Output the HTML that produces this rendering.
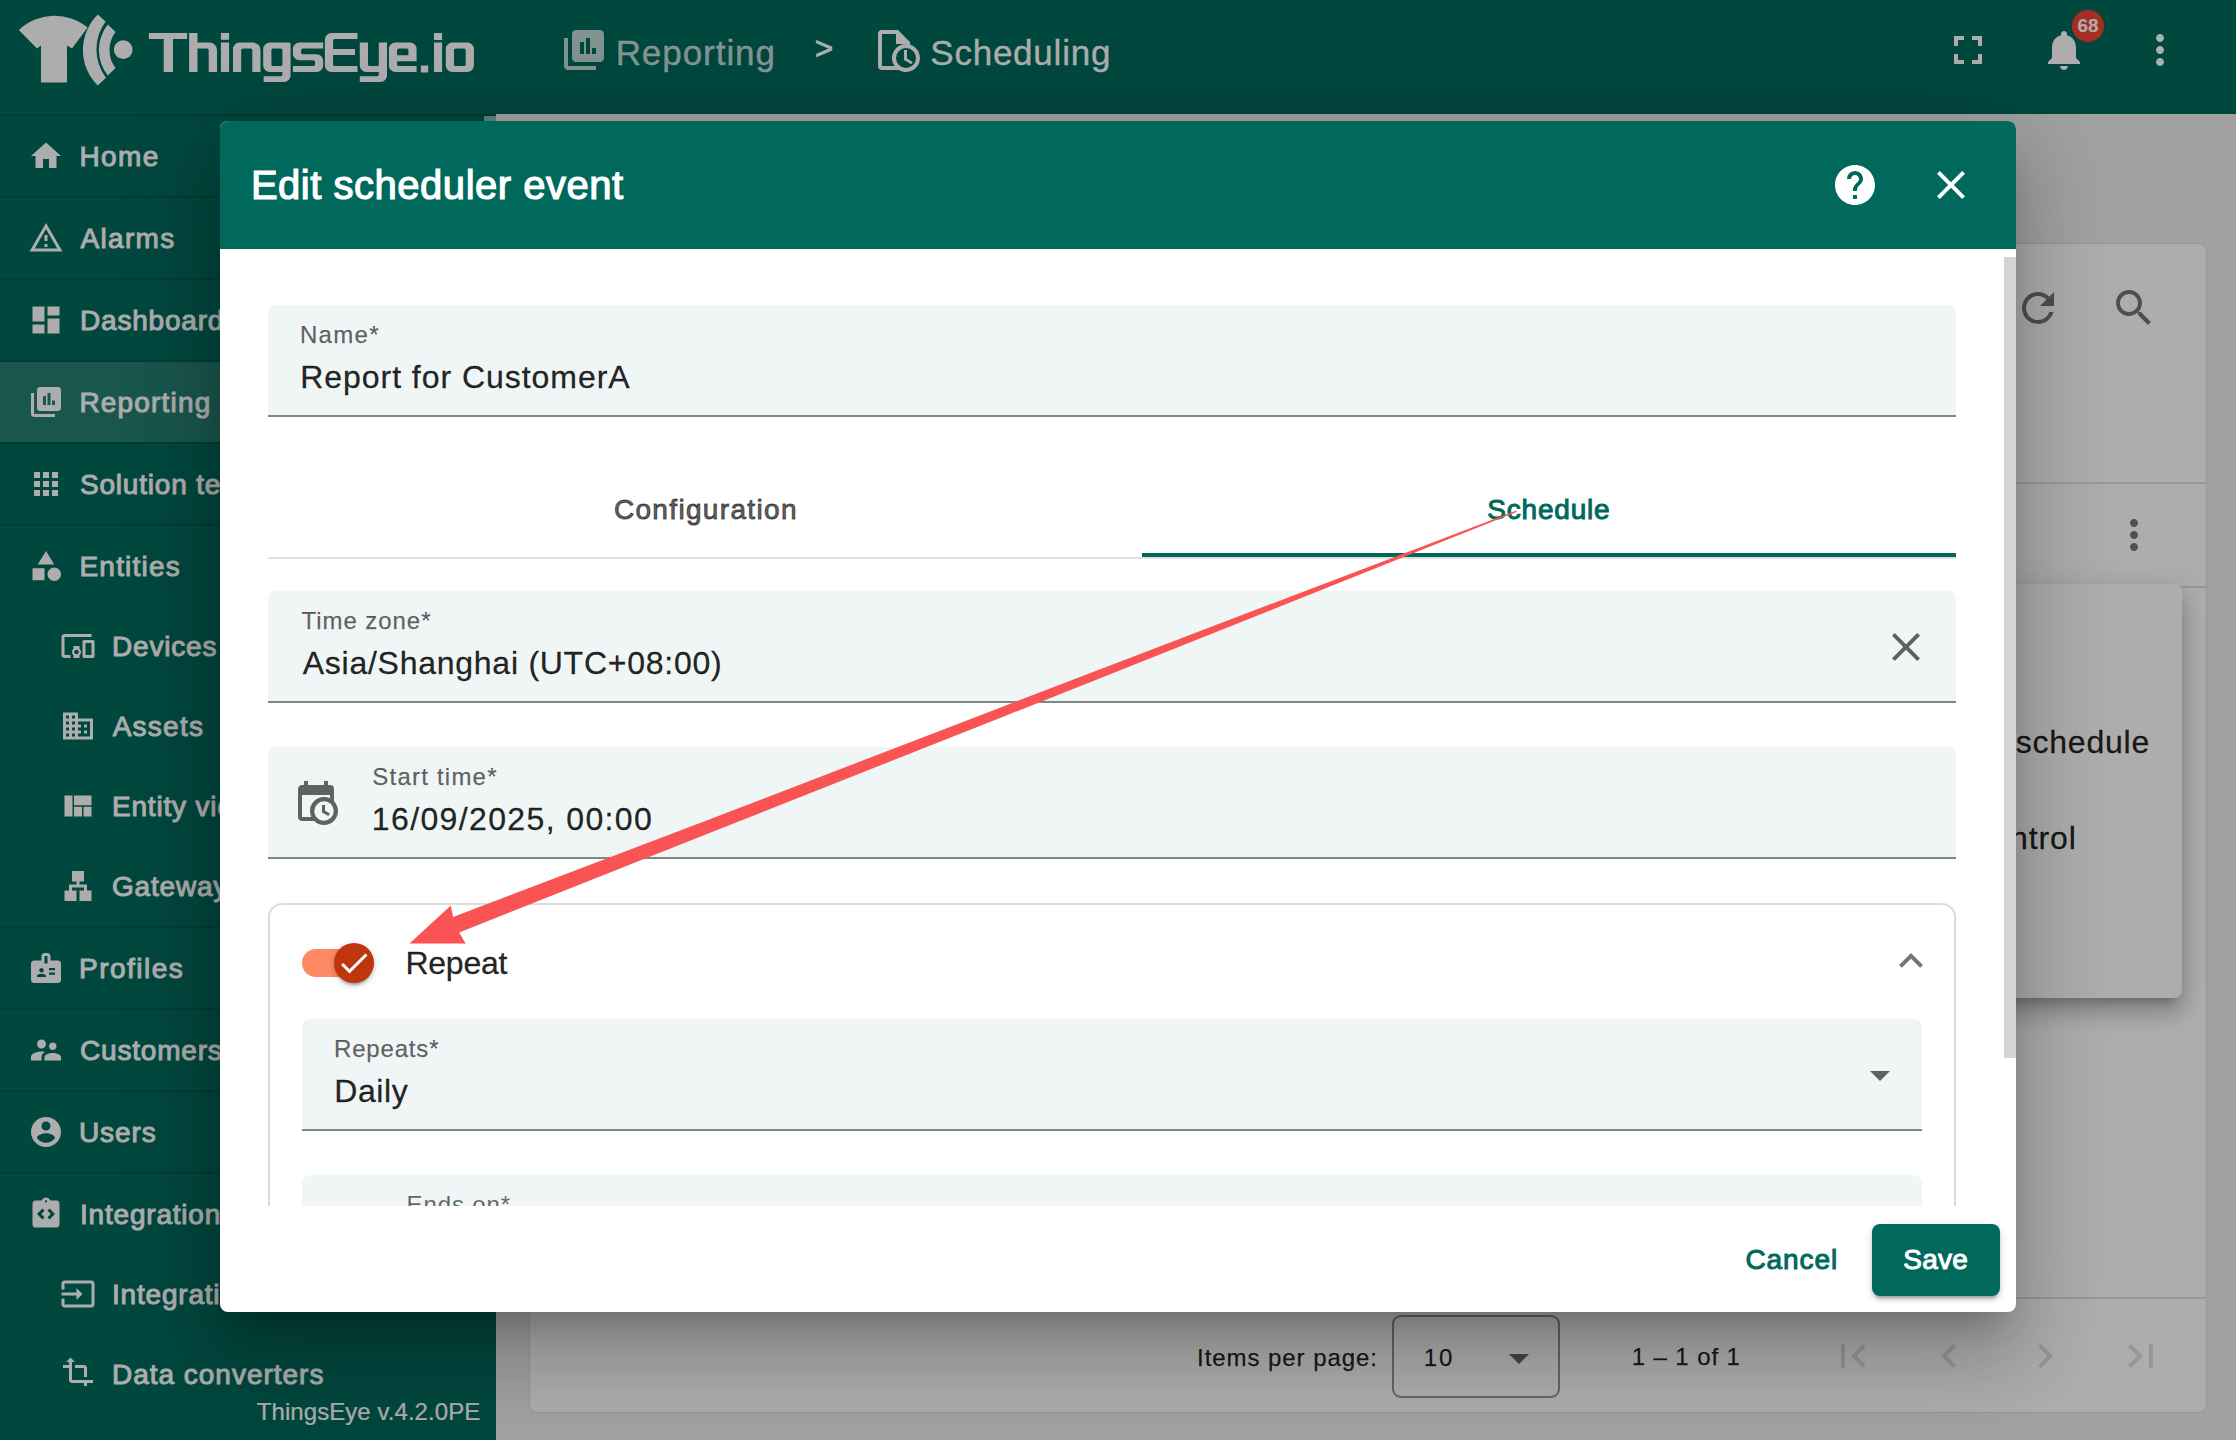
<!DOCTYPE html>
<html><head><meta charset="utf-8"><title>ThingsEye</title>
<style>
html,body{margin:0;padding:0;}
body{width:2236px;height:1440px;position:relative;overflow:hidden;background:#eeeeee;font-family:"Liberation Sans",sans-serif;}
.t{position:absolute;white-space:nowrap;line-height:1;font-family:"Liberation Sans",sans-serif;}
.i{position:absolute;display:block;}
.b{position:absolute;box-sizing:border-box;}
#page,#overlay,#dlg,#arrow{position:absolute;left:0;top:0;width:2236px;height:1440px;}
#overlay{background:rgba(0,0,0,0.32);}
</style></head><body>
<div id="page">
<div class="b" style="left:529px;top:243px;width:1678px;height:1170px;background:#fff;border-radius:9px;border:1.5px solid rgba(0,0,0,.13);"></div>
<svg class="i" style="left:2014.0px;top:284.0px;" width="48" height="48" viewBox="0 0 24 24" fill="rgba(0,0,0,.54)"><path d="M17.650 6.350C16.200 4.900 14.210 4 12 4c-4.420 0-7.990 3.580-7.990 8s3.570 8 7.990 8c3.730 0 6.840-2.550 7.730-6h-2.080c-.820 2.330-3.040 4-5.650 4-3.310 0-6-2.690-6-6s2.690-6 6-6c1.660 0 3.140.690 4.220 1.780L13 11h7V4l-2.350 2.350z"/></svg>
<svg class="i" style="left:2110.0px;top:284.0px;" width="48" height="48" viewBox="0 0 24 24" fill="rgba(0,0,0,.54)"><path d="M15.500 14h-.790l-.280-.270C15.410 12.590 16 11.110 16 9.500 16 5.910 13.090 3 9.500 3S3 5.910 3 9.500 5.910 16 9.500 16c1.610 0 3.090-.590 4.230-1.570l.270.280v.790l5 4.990L20.490 19l-4.990-5zm-6 0C7.010 14 5 11.990 5 9.500S7.010 5 9.500 5 14 7.010 14 9.500 11.990 14 9.500 14z"/></svg>
<div class="b" style="left:530px;top:482px;width:1676px;height:2px;background:rgba(0,0,0,.12);"></div>
<svg class="i" style="left:2110.0px;top:511.0px;" width="48" height="48" viewBox="0 0 24 24" fill="rgba(0,0,0,.54)"><path d="M12 8c1.100 0 2-.9 2-2s-.9-2-2-2-2 .9-2 2 .9 2 2 2zm0 2c-1.100 0-2 .9-2 2s.9 2 2 2 2-.9 2-2-.9-2-2-2zm0 6c-1.100 0-2 .9-2 2s.9 2 2 2 2-.9 2-2-.9-2-2-2z"/></svg>
<div class="b" style="left:530px;top:585.5px;width:1676px;height:2px;background:rgba(0,0,0,.12);"></div>
<div class="b" style="left:1700px;top:584px;width:482px;height:414px;background:#fff;border-radius:8px;box-shadow:0 10px 10px -6px rgba(0,0,0,.2),0 16px 20px 2px rgba(0,0,0,.14),0 6px 28px 4px rgba(0,0,0,.12);"></div>
<div class="t" style="left:2015.77px;top:726.4px;font-size:32px;color:rgba(0,0,0,.87);letter-spacing:0.77px;-webkit-text-stroke:0.3px rgba(0,0,0,.87);">schedule</div>
<div class="t" style="left:1974.29px;top:822.4px;font-size:32px;color:rgba(0,0,0,.87);letter-spacing:0.93px;-webkit-text-stroke:0.3px rgba(0,0,0,.87);">control</div>
<div class="b" style="left:530px;top:1297px;width:1676px;height:2px;background:rgba(0,0,0,.12);"></div>
<div class="t" style="left:1197.06px;top:1346.2px;font-size:24px;color:rgba(0,0,0,.87);letter-spacing:0.94px;-webkit-text-stroke:0.25px rgba(0,0,0,.87);">Items per page:</div>
<div class="b" style="left:1392px;top:1315px;width:168px;height:83px;border:2px solid rgba(0,0,0,.42);border-radius:9px;"></div>
<div class="t" style="left:1423.83px;top:1346.2px;font-size:24px;color:rgba(0,0,0,.87);letter-spacing:1.81px;-webkit-text-stroke:0.25px rgba(0,0,0,.87);">10</div>
<svg class="i" style="left:1508.5px;top:1353.5px" width="20" height="10" viewBox="0 0 22 11"><path d="M0 0h22L11 11z" fill="rgba(0,0,0,.6)"/></svg>
<div class="t" style="left:1631.73px;top:1344.7px;font-size:24px;color:rgba(0,0,0,.87);letter-spacing:0.90px;-webkit-text-stroke:0.25px rgba(0,0,0,.87);">1 – 1 of 1</div>
<svg class="i" style="left:1829.0px;top:1332.0px;" width="48" height="48" viewBox="0 0 24 24" fill="rgba(0,0,0,.13)"><path d="M18.410 16.590L13.820 12l4.590-4.590L17 6l-6 6 6 6zM6 6h2v12H6z"/></svg>
<svg class="i" style="left:1925.0px;top:1332.0px;" width="48" height="48" viewBox="0 0 24 24" fill="rgba(0,0,0,.13)"><path d="M15.410 7.410L14 6l-6 6 6 6 1.410-1.410L10.830 12z"/></svg>
<svg class="i" style="left:2021.0px;top:1332.0px;" width="48" height="48" viewBox="0 0 24 24" fill="rgba(0,0,0,.13)"><path d="M10 6L8.590 7.410 13.170 12l-4.580 4.590L10 18l6-6z"/></svg>
<svg class="i" style="left:2117.0px;top:1332.0px;" width="48" height="48" viewBox="0 0 24 24" fill="rgba(0,0,0,.13)"><path d="M5.590 7.410L10.180 12l-4.590 4.590L7 18l6-6-6-6zM16 6h2v12h-2z"/></svg>
<div class="b" style="left:0px;top:114px;width:496px;height:1326px;background:#00695c;"></div>
<div class="b" style="left:484px;top:116px;width:12px;height:1080px;background:rgba(255,255,255,.55);"></div>
<div class="b" style="left:0px;top:114px;width:496px;height:2px;background:rgba(0,0,0,.13);"></div>
<div class="b" style="left:0px;top:196px;width:484px;height:2px;background:rgba(0,0,0,.13);"></div>
<div class="b" style="left:0px;top:278px;width:484px;height:2px;background:rgba(0,0,0,.13);"></div>
<div class="b" style="left:0px;top:360px;width:484px;height:2px;background:rgba(0,0,0,.13);"></div>
<div class="b" style="left:0px;top:442px;width:484px;height:2px;background:rgba(0,0,0,.13);"></div>
<div class="b" style="left:0px;top:524px;width:484px;height:2px;background:rgba(0,0,0,.13);"></div>
<div class="b" style="left:0px;top:926px;width:484px;height:2px;background:rgba(0,0,0,.13);"></div>
<div class="b" style="left:0px;top:1008px;width:484px;height:2px;background:rgba(0,0,0,.13);"></div>
<div class="b" style="left:0px;top:1090px;width:484px;height:2px;background:rgba(0,0,0,.13);"></div>
<div class="b" style="left:0px;top:1172px;width:484px;height:2px;background:rgba(0,0,0,.13);"></div>
<div class="b" style="left:0px;top:362px;width:484px;height:80px;background:rgba(255,255,255,.15);"></div>
<svg class="i" style="left:28.0px;top:138.0px;" width="36" height="36" viewBox="0 0 24 24" fill="#fff"><path d="M10 20v-6h4v6h5v-8h3L12 3 2 12h3v8z"/></svg>
<div class="t" style="left:79.44px;top:143.3px;font-size:28px;color:#fff;letter-spacing:1.43px;-webkit-text-stroke:0.95px #fff;">Home</div>
<svg class="i" style="left:28.0px;top:220.0px;" width="36" height="36" viewBox="0 0 24 24" fill="#fff"><path d="M12 5.99L19.53 19H4.47L12 5.99M12 2L1 21h22L12 2zm1 14h-2v2h2v-2zm0-6h-2v4h2v-4z"/></svg>
<div class="t" style="left:80.47px;top:225.3px;font-size:28px;color:#fff;letter-spacing:1.32px;-webkit-text-stroke:0.95px #fff;">Alarms</div>
<svg class="i" style="left:28.0px;top:302.0px;" width="36" height="36" viewBox="0 0 24 24" fill="#fff"><path d="M3 13h8V3H3v10zm0 8h8v-6H3v6zm10 0h8V11h-8v10zm0-18v6h8V3h-8z"/></svg>
<div class="t" style="left:80.00px;top:307.3px;font-size:28px;color:#fff;letter-spacing:0.80px;-webkit-text-stroke:0.95px #fff;">Dashboards</div>
<svg class="i" style="left:28.0px;top:384.0px;" width="36" height="36" viewBox="0 0 24 24" fill="#fff"><path d="M20 2H8C6.9 2 6 2.9 6 4V16C6 17.11 6.9 18 8 18H20C21.11 18 22 17.11 22 16V4C22 2.9 21.11 2 20 2M12 14H10V8H12V14M15 14H13V6H15V14M18 14H16V11H18V14M4 6H2V20C2 21.11 2.9 22 4 22H18V20H4V6Z"/></svg>
<div class="t" style="left:79.44px;top:389.3px;font-size:28px;color:#fff;letter-spacing:1.18px;-webkit-text-stroke:0.95px #fff;">Reporting</div>
<svg class="i" style="left:28.0px;top:466.0px;" width="36" height="36" viewBox="0 0 24 24" fill="#fff"><path d="M4 8h4V4H4v4zm6 12h4v-4h-4v4zm-6 0h4v-4H4v4zm0-6h4v-4H4v4zm6 0h4v-4h-4v4zm6-10v4h4V4h-4zm-6 4h4V4h-4v4zm6 6h4v-4h-4v4zm0 6h4v-4h-4v4z"/></svg>
<div class="t" style="left:80.00px;top:471.3px;font-size:28px;color:#fff;letter-spacing:0.80px;-webkit-text-stroke:0.95px #fff;">Solution templates</div>
<svg class="i" style="left:28.0px;top:548.0px;" width="36" height="36" viewBox="0 0 24 24" fill="#fff"><path d="M12 2l-5.5 9h11zM17.5 13a4.5 4.5 0 1 0 0 9a4.5 4.5 0 1 0 0-9zM3 13.5h8v8H3z"/></svg>
<div class="t" style="left:79.44px;top:553.3px;font-size:28px;color:#fff;letter-spacing:1.22px;-webkit-text-stroke:0.95px #fff;">Entities</div>
<svg class="i" style="left:60.0px;top:628.0px;" width="36" height="36" viewBox="0 0 24 24" fill="#fff"><path d="M3 6h18V4H3c-1.1 0-2 .9-2 2v12c0 1.1.9 2 2 2h4v-2H3V6zm10 6H9v1.78c-.61.55-1 1.33-1 2.22s.39 1.67 1 2.22V20h4v-1.78c.61-.55 1-1.34 1-2.22s-.39-1.67-1-2.22V12zm-2 5.5c-.83 0-1.5-.67-1.5-1.5s.67-1.5 1.5-1.5 1.5.67 1.5 1.5-.67 1.5-1.5 1.5zM22 8h-6c-.5 0-1 .5-1 1v10c0 .5.5 1 1 1h6c.5 0 1-.5 1-1V9c0-.5-.5-1-1-1zm-1 10h-4v-8h4v8z"/></svg>
<div class="t" style="left:112.00px;top:633.3px;font-size:28px;color:#fff;letter-spacing:0.80px;-webkit-text-stroke:0.95px #fff;">Devices</div>
<svg class="i" style="left:60.0px;top:708.0px;" width="36" height="36" viewBox="0 0 24 24" fill="#fff"><path d="M12 7V3H2v18h20V7H12zM6 19H4v-2h2v2zm0-4H4v-2h2v2zm0-4H4V9h2v2zm0-4H4V5h2v2zm4 12H8v-2h2v2zm0-4H8v-2h2v2zm0-4H8V9h2v2zm0-4H8V5h2v2zm10 12h-8v-2h2v-2h-2v-2h2v-2h-2V9h8v10zm-2-8h-2v2h2v-2zm0 4h-2v2h2v-2z"/></svg>
<div class="t" style="left:112.67px;top:713.3px;font-size:28px;color:#fff;letter-spacing:1.25px;-webkit-text-stroke:0.95px #fff;">Assets</div>
<svg class="i" style="left:60.0px;top:788.0px;" width="36" height="36" viewBox="0 0 24 24" fill="#fff"><path d="M21 5v6.5H9.33V5H21zm-6.330 14v-6.500H9.330V19h5.340zm1-6.500V19H21v-6.500h-5.330zM8.330 19V5H3v14h5.330z"/></svg>
<div class="t" style="left:112.00px;top:793.3px;font-size:28px;color:#fff;letter-spacing:0.80px;-webkit-text-stroke:0.95px #fff;">Entity views</div>
<svg class="i" style="left:60.0px;top:868.0px;" width="36" height="36" viewBox="0 0 24 24" fill="#fff"><path d="M13 22h8v-7h-3v-4h-5V9h3V2H8v7h3v2H6v4H3v7h8v-7H8v-2h8v2h-3z"/></svg>
<div class="t" style="left:112.00px;top:873.3px;font-size:28px;color:#fff;letter-spacing:0.80px;-webkit-text-stroke:0.95px #fff;">Gateways</div>
<svg class="i" style="left:28.0px;top:950.0px;" width="36" height="36" viewBox="0 0 24 24" fill="#fff"><path d="M20 7h-5V4c0-1.1-.9-2-2-2h-2c-1.1 0-2 .9-2 2v3H4c-1.1 0-2 .9-2 2v11c0 1.1.9 2 2 2h16c1.1 0 2-.9 2-2V9c0-1.1-.9-2-2-2zM9 12c.83 0 1.5.67 1.5 1.5S9.83 15 9 15s-1.5-.67-1.5-1.5S8.17 12 9 12zm3 6H6v-.75c0-1 2-1.5 3-1.5s3 .5 3 1.5V18zm1-9h-2V4h2v5zm5 7.5h-4V15h4v1.5zm0-3h-4V12h4v1.5z"/></svg>
<div class="t" style="left:79.03px;top:955.3px;font-size:28px;color:#fff;letter-spacing:1.48px;-webkit-text-stroke:0.95px #fff;">Profiles</div>
<svg class="i" style="left:28.0px;top:1032.0px;" width="36" height="36" viewBox="0 0 24 24" fill="#fff"><path d="M16.5 12c1.38 0 2.49-1.12 2.49-2.5S17.88 7 16.5 7C15.12 7 14 8.12 14 9.5s1.12 2.5 2.5 2.5zM9 11c1.66 0 2.99-1.34 2.99-3S10.66 5 9 5C7.34 5 6 6.34 6 8s1.34 3 3 3zm7.5 3c-1.83 0-5.5.92-5.5 2.75V19h11v-2.25c0-1.83-3.67-2.75-5.5-2.75zM9 13c-2.33 0-7 1.17-7 3.5V19h7v-2.25c0-.85.33-2.34 2.37-3.47C10.5 13.1 9.66 13 9 13z"/></svg>
<div class="t" style="left:80.00px;top:1037.3px;font-size:28px;color:#fff;letter-spacing:0.80px;-webkit-text-stroke:0.95px #fff;">Customers</div>
<svg class="i" style="left:28.0px;top:1114.0px;" width="36" height="36" viewBox="0 0 24 24" fill="#fff"><path d="M12 2C6.48 2 2 6.48 2 12s4.48 10 10 10 10-4.48 10-10S17.52 2 12 2zm0 3c1.66 0 3 1.34 3 3s-1.34 3-3 3-3-1.34-3-3 1.34-3 3-3zm0 14.2c-2.5 0-4.71-1.28-6-3.22.03-1.99 4-3.08 6-3.08 1.99 0 5.97 1.09 6 3.08-1.29 1.94-3.5 3.22-6 3.22z"/></svg>
<div class="t" style="left:78.97px;top:1119.3px;font-size:28px;color:#fff;letter-spacing:0.89px;-webkit-text-stroke:0.95px #fff;">Users</div>
<svg class="i" style="left:28.0px;top:1196.0px;" width="36" height="36" viewBox="0 0 24 24" fill="#fff"><path d="M19 3h-4.18C14.4 1.84 13.3 1 12 1s-2.4.84-2.82 2H5c-.14 0-.27.01-.4.04-.39.08-.74.28-1.01.55-.18.18-.33.4-.43.64-.1.23-.16.49-.16.77v14c0 .27.06.54.16.78s.25.45.43.64c.27.27.62.47 1.01.55.13.02.26.03.4.03h14c1.1 0 2-.9 2-2V5c0-1.1-.9-2-2-2zm-8 11.17l-1.41 1.42L6 12l3.590-3.590L11 9.830 8.830 12 11 14.170zm1-9.920c-.41 0-.75-.34-.75-.75s.34-.75.75-.75.75.34.75.75-.34.75-.75.75zm2.410 11.340L13 14.170 15.170 12 13 9.830l1.410-1.420L18 12l-3.590 3.590z"/></svg>
<div class="t" style="left:80.00px;top:1201.3px;font-size:28px;color:#fff;letter-spacing:0.80px;-webkit-text-stroke:0.95px #fff;">Integrations center</div>
<svg class="i" style="left:60.0px;top:1276.0px;" width="36" height="36" viewBox="0 0 24 24" fill="#fff"><path d="M21 3.01H3c-1.1 0-2 .9-2 2V9h2V4.990h18v14.030H3V15H1v4.010c0 1.100.9 1.980 2 1.980h18c1.100 0 2-.880 2-1.980v-14c0-1.110-.9-2-2-2zM11 16l4-4-4-4v3H1v2h10v3z"/></svg>
<div class="t" style="left:112.00px;top:1281.3px;font-size:28px;color:#fff;letter-spacing:0.80px;-webkit-text-stroke:0.95px #fff;">Integrations</div>
<svg class="i" style="left:60.0px;top:1356.0px;" width="36" height="36" viewBox="0 0 24 24" fill="#fff"><path d="M22 18v-2H8V4h2L7 1 4 4h2v2H2v2h4v8c0 1.100.9 2 2 2h8v2h-2l3 3 3-3h-2v-2h4zM10 8h6v6h2V8c0-1.100-.9-2-2-2h-6v2z"/></svg>
<div class="t" style="left:112.03px;top:1361.3px;font-size:28px;color:#fff;letter-spacing:0.98px;-webkit-text-stroke:0.95px #fff;">Data converters</div>
<div class="b" style="left:0px;top:1386px;width:496px;height:54px;background:#00695c;"></div>
<div class="t" style="left:256.82px;top:1400.0px;font-size:24px;color:#fff;letter-spacing:0.06px;-webkit-text-stroke:0.2px #fff;">ThingsEye v.4.2.0PE</div>
<div class="b" style="left:0px;top:0px;width:2236px;height:114px;background:#00695c;"></div>
<svg class="i" style="left:0;top:0" width="500" height="114" viewBox="0 0 500 114" fill="#fff">
<path d="M18.800 30 A52 52 0 0 1 87.600 27.500 L72 48.500 L67 45.600 L67 82.500 L41 82.500 L41 45.600 L37 48.500 Z"/>
<path d="M97.800 14.400 A50 50 0 0 0 97.800 85.600 L106 77.800 A47 47 0 0 1 105.600 21.500 Z"/>
<path d="M107.800 24.400 A40.900 40.900 0 0 0 107.800 75.400 L115.600 67.900 A29.500 29.500 0 0 1 115.600 31.900 Z"/>
<circle cx="123.200" cy="49.700" r="9.400"/>
<path fill-rule="nonzero" d="M148.90 33.00L187.10 33.00L187.10 38.90L173.00 38.90L173.00 72.00L163.70 72.00L163.70 38.90L148.90 38.90ZM189.10 33.00L197.50 33.00L197.50 42.60L209.50 42.60A7.50 7.50 0 0 1 217.00 50.10L217.00 72.00L208.70 72.00L208.70 50.10A1.60 1.60 0 0 0 207.10 48.50L197.50 48.50L197.50 72.00L189.10 72.00ZM220.9 33.0H229.1V39.8H220.9ZM220.9 42.6H229.1V72.0H220.9ZM233.00 49.10A6.50 6.50 0 0 1 239.50 42.60L253.00 42.60A7.50 7.50 0 0 1 260.50 50.10L260.50 72.00L252.30 72.00L252.30 50.10A1.60 1.60 0 0 0 250.70 48.50L242.80 48.50A1.60 1.60 0 0 0 241.20 50.10L241.20 72.00L233.00 72.00ZM263.20 49.10A6.50 6.50 0 0 1 269.70 42.60L289.10 42.60A1.50 1.50 0 0 1 290.60 44.10L290.60 75.50A6.50 6.50 0 0 1 284.10 82.00L263.60 82.00L263.60 76.20L280.80 76.20A1.60 1.60 0 0 0 282.40 74.60L282.40 72.00L269.70 72.00A6.50 6.50 0 0 1 263.20 65.50ZM273.00 48.50A1.60 1.60 0 0 0 271.40 50.10L271.40 64.50A1.60 1.60 0 0 0 273.00 66.10L280.80 66.10A1.60 1.60 0 0 0 282.40 64.50L282.40 50.10A1.60 1.60 0 0 0 280.80 48.50ZM292.90 49.10A6.50 6.50 0 0 1 299.40 42.60L323.20 42.60L323.20 48.50L302.70 48.50A1.60 1.60 0 0 0 301.10 50.10L301.10 52.75A1.60 1.60 0 0 0 302.70 54.35L316.70 54.35A6.50 6.50 0 0 1 323.20 60.85L323.20 65.50A6.50 6.50 0 0 1 316.70 72.00L292.90 72.00L292.90 66.10L313.40 66.10A1.60 1.60 0 0 0 315.00 64.50L315.00 61.85A1.60 1.60 0 0 0 313.40 60.25L299.40 60.25A6.50 6.50 0 0 1 292.90 53.75ZM324.90 39.50A6.50 6.50 0 0 1 331.40 33.00L357.50 33.00L357.50 38.90L334.70 38.90A1.60 1.60 0 0 0 333.10 40.50L333.10 49.10L355.00 49.10L355.00 54.90L333.10 54.90L333.10 64.50A1.60 1.60 0 0 0 334.70 66.10L357.50 66.10L357.50 72.00L331.40 72.00A6.50 6.50 0 0 1 324.90 65.50ZM359.80 42.60L368.00 42.60L368.00 64.50A1.60 1.60 0 0 0 369.60 66.10L377.20 66.10A1.60 1.60 0 0 0 378.80 64.50L378.80 42.60L387.00 42.60L387.00 75.50A6.50 6.50 0 0 1 380.50 82.00L359.80 82.00L359.80 76.20L377.20 76.20A1.60 1.60 0 0 0 378.80 74.60L378.80 72.00L366.30 72.00A6.50 6.50 0 0 1 359.80 65.50ZM388.90 49.10A6.50 6.50 0 0 1 395.40 42.60L410.10 42.60A6.50 6.50 0 0 1 416.60 49.10L416.60 61.20L397.10 61.20L397.10 64.50A1.60 1.60 0 0 0 398.70 66.10L416.60 66.10L416.60 72.00L395.40 72.00A6.50 6.50 0 0 1 388.90 65.50ZM398.70 48.50A1.60 1.60 0 0 0 397.10 50.10L397.10 55.30L408.40 55.30L408.40 50.10A1.60 1.60 0 0 0 406.80 48.50ZM420.9 65.4H428.2V72.4H420.9ZM434 33.0H442.1V39.9H434ZM434 42.6H442.1V72.0H434ZM445.80 49.10A6.50 6.50 0 0 1 452.30 42.60L467.40 42.60A6.50 6.50 0 0 1 473.90 49.10L473.90 65.50A6.50 6.50 0 0 1 467.40 72.00L452.30 72.00A6.50 6.50 0 0 1 445.80 65.50ZM455.60 48.50A1.60 1.60 0 0 0 454.00 50.10L454.00 64.50A1.60 1.60 0 0 0 455.60 66.10L464.10 66.10A1.60 1.60 0 0 0 465.70 64.50L465.70 50.10A1.60 1.60 0 0 0 464.10 48.50Z"/>
</svg>
<svg class="i" style="left:560.0px;top:26.0px;" width="48" height="48" viewBox="0 0 24 24" fill="rgba(255,255,255,.75)"><path d="M20 2H8C6.9 2 6 2.9 6 4V16C6 17.11 6.9 18 8 18H20C21.11 18 22 17.11 22 16V4C22 2.9 21.11 2 20 2M12 14H10V8H12V14M15 14H13V6H15V14M18 14H16V11H18V14M4 6H2V20C2 21.11 2.9 22 4 22H18V20H4V6Z"/></svg>
<div class="t" style="left:615.65px;top:34.8px;font-size:35px;color:rgba(255,255,255,.75);letter-spacing:0.95px;-webkit-text-stroke:0.3px rgba(255,255,255,.75);">Reporting</div>
<div class="t" style="left:814.98px;top:32.8px;font-size:31px;color:#fff;letter-spacing:0.00px;-webkit-text-stroke:0.9px #fff;">&gt;</div>
<svg class="i" style="left:874.0px;top:26.0px;" width="48" height="48" viewBox="0 0 24 24" fill="#fff"><path d="M4 2H12L18 8V9.29A7 7 0 1 1 12.39 22H4A2 2 0 0 1 2 20V4A2 2 0 0 1 4 2ZM4 4V20H10.26A7 7 0 0 1 16 9H11V4ZM16 11A5 5 0 1 0 16 21A5 5 0 1 0 16 11ZM15 12V17L18.61 19.16L19.36 17.94L16.5 16.25V12Z"/></svg>
<div class="t" style="left:930.27px;top:34.6px;font-size:35px;color:#fff;letter-spacing:0.77px;-webkit-text-stroke:0.3px #fff;">Scheduling</div>
<svg class="i" style="left:1944.0px;top:26.0px;" width="48" height="48" viewBox="0 0 24 24" fill="#fff"><path d="M7 14H5v5h5v-2H7v-3zm-2-4h2V7h3V5H5v5zm12 7h-3v2h5v-5h-2v3zM14 5v2h3v3h2V5h-5z"/></svg>
<svg class="i" style="left:2040.0px;top:26.0px;" width="48" height="48" viewBox="0 0 24 24" fill="#fff"><path d="M12 22c1.100 0 2-.9 2-2h-4c0 1.100.890 2 2 2zm6-6v-5c0-3.070-1.640-5.640-4.500-6.320V4c0-.830-.670-1.500-1.500-1.500s-1.500.670-1.500 1.500v.680C7.630 5.360 6 7.920 6 11v5l-2 2v1h16v-1l-2-2z"/></svg>
<svg class="i" style="left:2136.0px;top:26.0px;" width="48" height="48" viewBox="0 0 24 24" fill="#fff"><path d="M12 8c1.100 0 2-.9 2-2s-.9-2-2-2-2 .9-2 2 .9 2 2 2zm0 2c-1.100 0-2 .9-2 2s.9 2 2 2 2-.9 2-2-.9-2-2-2zm0 6c-1.100 0-2 .9-2 2s.9 2 2 2 2-.9 2-2-.9-2-2-2z"/></svg>
<div class="b" style="left:2072px;top:10px;width:32px;height:32px;background:#f44336;border-radius:16px;"></div>
<div class="t" style="left:2077.53px;top:16.4px;font-size:19px;color:#fff;letter-spacing:-0.20px;font-weight:700;">68</div>
</div><div id="overlay"></div>
<div id="dlg">
<div class="b" style="left:220px;top:121px;width:1796px;height:1191px;background:#fff;border-radius:8px;box-shadow:0 22px 30px -14px rgba(0,0,0,.2),0 48px 76px 6px rgba(0,0,0,.14),0 18px 92px 16px rgba(0,0,0,.12);"></div>
<div class="b" style="left:220px;top:121px;width:1796px;height:128px;background:#00695c;border-radius:8px 8px 0 0;"></div>
<div class="t" style="left:250.90px;top:165.3px;font-size:40px;color:#fff;letter-spacing:0.52px;-webkit-text-stroke:1.2px #fff;">Edit scheduler event</div>
<svg class="i" style="left:1831.0px;top:161.0px;" width="48" height="48" viewBox="0 0 24 24" fill="#fff"><path d="M12 2C6.480 2 2 6.480 2 12s4.480 10 10 10 10-4.480 10-10S17.520 2 12 2zm1 17h-2v-2h2v2zm2.070-7.750l-.9.920C13.450 12.900 13 13.500 13 15h-2v-.5c0-1.100.450-2.100 1.170-2.830l1.240-1.260c.370-.360.590-.860.590-1.410 0-1.100-.9-2-2-2s-2 .9-2 2H8c0-2.210 1.790-4 4-4s4 1.790 4 4c0 .880-.360 1.680-.930 2.250z"/></svg>
<svg class="i" style="left:1927.0px;top:161.0px;" width="48" height="48" viewBox="0 0 24 24" fill="#fff"><path d="M19 6.410L17.590 5 12 10.590 6.410 5 5 6.410 10.590 12 5 17.590 6.410 19 12 13.410 17.590 19 19 17.590 13.410 12z"/></svg>
<div class="b" style="left:2004px;top:257px;width:12px;height:801px;background:#d5d5d5;"></div>
<div class="b" style="left:268px;top:305px;width:1688px;height:112px;background:#f0f5f5;border-radius:8px 8px 0 0;border-bottom:2px solid rgba(0,0,0,.46);"></div>
<div class="t" style="left:300.00px;top:322.7px;font-size:24px;color:rgba(0,0,0,.6);letter-spacing:1.29px;-webkit-text-stroke:0.25px rgba(0,0,0,.6);">Name*</div>
<div class="t" style="left:300.19px;top:361.2px;font-size:32px;color:rgba(0,0,0,.87);letter-spacing:0.96px;-webkit-text-stroke:0.3px rgba(0,0,0,.87);">Report for CustomerA</div>
<div class="b" style="left:268px;top:556.5px;width:1688px;height:2px;background:#e0e0e0;"></div>
<div class="b" style="left:1142px;top:553px;width:814px;height:4px;background:#00695c;"></div>
<div class="t" style="left:613.90px;top:495.7px;font-size:28px;color:rgba(0,0,0,.6);letter-spacing:1.34px;-webkit-text-stroke:1.0px rgba(0,0,0,.6);">Configuration</div>
<div class="t" style="left:1487.24px;top:495.7px;font-size:28px;color:#00695c;letter-spacing:0.81px;-webkit-text-stroke:1.0px #00695c;">Schedule</div>
<div class="b" style="left:268px;top:591px;width:1688px;height:112px;background:#f0f5f5;border-radius:8px 8px 0 0;border-bottom:2px solid rgba(0,0,0,.46);"></div>
<div class="t" style="left:301.44px;top:608.7px;font-size:24px;color:rgba(0,0,0,.6);letter-spacing:0.95px;-webkit-text-stroke:0.25px rgba(0,0,0,.6);">Time zone*</div>
<div class="t" style="left:302.75px;top:647.2px;font-size:32px;color:rgba(0,0,0,.87);letter-spacing:0.74px;-webkit-text-stroke:0.3px rgba(0,0,0,.87);">Asia/Shanghai (UTC+08:00)</div>
<svg class="i" style="left:1881.6px;top:623.0px;" width="48" height="48" viewBox="0 0 24 24" fill="rgba(0,0,0,.6)"><path d="M19 6.410L17.590 5 12 10.590 6.410 5 5 6.410 10.590 12 5 17.590 6.410 19 12 13.410 17.590 19 19 17.590 13.410 12z"/></svg>
<div class="b" style="left:268px;top:747px;width:1688px;height:112px;background:#f0f5f5;border-radius:8px 8px 0 0;border-bottom:2px solid rgba(0,0,0,.46);"></div>
<div class="t" style="left:372.35px;top:764.7px;font-size:24px;color:rgba(0,0,0,.6);letter-spacing:1.21px;-webkit-text-stroke:0.25px rgba(0,0,0,.6);">Start time*</div>
<div class="t" style="left:371.85px;top:803.2px;font-size:32px;color:rgba(0,0,0,.87);letter-spacing:1.37px;-webkit-text-stroke:0.3px rgba(0,0,0,.87);">16/09/2025, 00:00</div>
<svg class="i" style="left:292.0px;top:779.0px;" width="48" height="48" viewBox="0 0 24 24" fill="rgba(0,0,0,.6)"><path d="M15 13H16.500V15.820L18.940 17.230L18.190 18.530L15 16.690V13M19 8H5V19H9.670C9.240 18.090 9 17.070 9 16A7 7 0 0 1 16 9C17.070 9 18.090 9.240 19 9.670V8M5 21C3.890 21 3 20.100 3 19V5C3 3.890 3.890 3 5 3H6V1H8V3H16V1H18V3H19A2 2 0 0 1 21 5V11.100C22.240 12.360 23 14.090 23 16A7 7 0 0 1 16 23C14.090 23 12.360 22.240 11.100 21H5M16 11.150A4.850 4.850 0 0 0 11.150 16C11.150 18.680 13.320 20.850 16 20.850A4.850 4.850 0 0 0 20.850 16C20.850 13.320 18.680 11.150 16 11.150Z"/></svg>
<div class="b" style="left:268px;top:903px;width:1688px;height:303px;overflow:hidden;">
<div class="b" style="left:0;top:0;width:1688px;height:500px;border:2px solid #dcdcdc;border-radius:14px;"></div>
</div>
<div class="b" style="left:302px;top:949px;width:72px;height:28px;background:#ff8a65;border-radius:14px;"></div>
<div class="b" style="left:334px;top:943px;width:40px;height:40px;background:#bf360c;border-radius:20px;box-shadow:0 4px 2px -2px rgba(0,0,0,.2),0 2px 4px rgba(0,0,0,.14),0 2px 10px rgba(0,0,0,.12);"></div>
<svg class="i" style="left:336.0px;top:945.0px;" width="36" height="36" viewBox="0 0 24 24" fill="#fff"><path d="M9 16.17L4.83 12l-1.42 1.41L9 19 21 7l-1.41-1.410z"/></svg>
<div class="t" style="left:405.49px;top:946.6px;font-size:32px;color:rgba(0,0,0,.87);letter-spacing:-0.26px;-webkit-text-stroke:0.3px rgba(0,0,0,.87);">Repeat</div>
<svg class="i" style="left:1887.0px;top:937.0px;" width="48" height="48" viewBox="0 0 24 24" fill="rgba(0,0,0,.54)"><path d="M12 8l-6 6 1.410 1.410L12 10.830l4.590 4.580L18 14z"/></svg>
<div class="b" style="left:302px;top:1019px;width:1620px;height:112px;background:#f0f5f5;border-radius:8px 8px 0 0;border-bottom:2px solid rgba(0,0,0,.46);"></div>
<div class="t" style="left:334.00px;top:1036.7px;font-size:24px;color:rgba(0,0,0,.6);letter-spacing:0.82px;-webkit-text-stroke:0.25px rgba(0,0,0,.6);">Repeats*</div>
<div class="t" style="left:334.19px;top:1075.2px;font-size:32px;color:rgba(0,0,0,.87);letter-spacing:0.59px;-webkit-text-stroke:0.3px rgba(0,0,0,.87);">Daily</div>
<svg class="i" style="left:1870px;top:1071px" width="20" height="10" viewBox="0 0 20 10"><path d="M0 0h20L10 10z" fill="rgba(0,0,0,.6)"/></svg>
<div class="b" style="left:302px;top:1175px;width:1620px;height:31px;overflow:hidden;">
<div class="b" style="left:0;top:0;width:1620px;height:112px;background:#f0f5f5;border-radius:8px 8px 0 0;"></div>
<div class="t" style="left:104.500px;top:17.7px;font-size:24px;color:rgba(0,0,0,.6);letter-spacing:0.9px;">Ends on*</div>
</div>
<div class="t" style="left:1745.40px;top:1246.3px;font-size:28px;color:#00695c;letter-spacing:0.91px;-webkit-text-stroke:1.0px #00695c;">Cancel</div>
<div class="b" style="left:1872px;top:1224px;width:128px;height:72px;background:#00695c;border-radius:8px;box-shadow:0 6px 2px -4px rgba(0,0,0,.2),0 4px 4px rgba(0,0,0,.14),0 2px 10px rgba(0,0,0,.12);"></div>
<div class="t" style="left:1903.24px;top:1246.3px;font-size:28px;color:#fff;letter-spacing:0.23px;-webkit-text-stroke:1.0px #fff;">Save</div>
</div>
<svg id="arrow" width="2236" height="1440" viewBox="0 0 2236 1440"><polygon points="1516.5,510.4 1400.0,554.9 1300.0,592.9 1000.0,707.7 700.0,823.1 453.1,917.0 450.8,905.6 409.5,943.5 465.6,943.5 459.2,932.5 700.0,836.7 1000.0,718.0 1300.0,598.5 1400.0,558.5 1516.5,512.0" fill="#f95353"/></svg>
</body></html>
